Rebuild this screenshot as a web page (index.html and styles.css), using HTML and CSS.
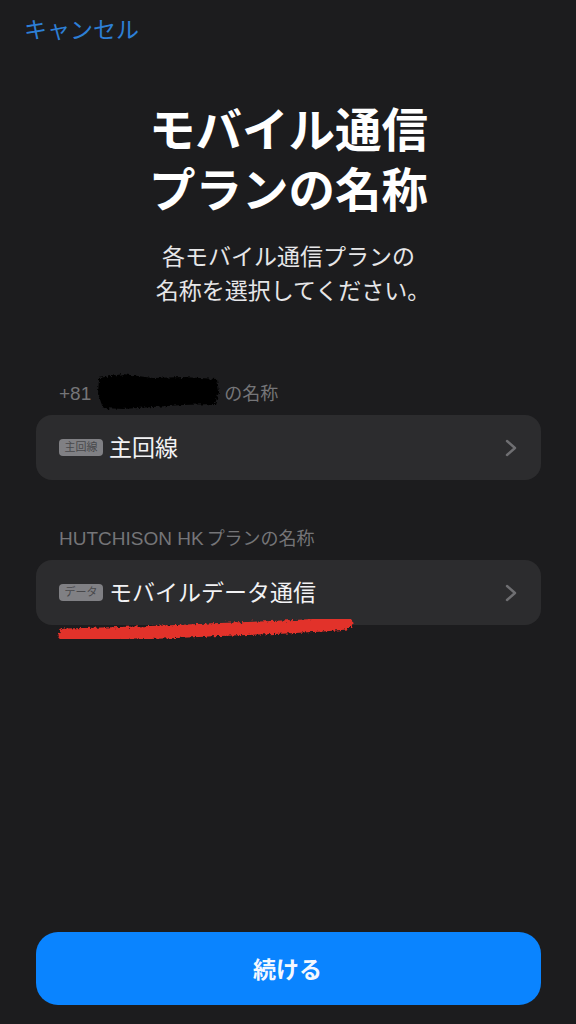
FILE: index.html
```html
<!DOCTYPE html>
<html lang="ja">
<head>
<meta charset="utf-8">
<title>モバイル通信プランの名称</title>
<link rel="stylesheet" href="styles.css">
</head>
<body>
<svg class="defs" width="0" height="0">
  <filter id="rough" x="-5%" y="-30%" width="110%" height="160%">
    <feTurbulence type="fractalNoise" baseFrequency="0.35" numOctaves="2" seed="4"/>
    <feDisplacementMap in="SourceGraphic" scale="5"/>
  </filter>
</svg>
<main class="screen">
  <a class="cancel">キャンセル</a>
  <h1 class="title">モバイル通信<br>プランの名称</h1>
  <p class="subtitle">各モバイル通信プランの<br><span class="hang">名称を選択してください。</span></p>

  <section class="group first">
    <div class="label"><span class="latin">+81</span> <span class="masked"><svg class="scrib-black" viewBox="0 0 130 38" preserveAspectRatio="none"><path d="M6 6 L30 2 L60 6 L90 5 L124 7 L126 20 L122 32 L90 33 L60 35 L30 37 L10 36 L5 22 Z" fill="#000" filter="url(#rough)"/></svg></span>の名称</div>
    <div class="row">
      <span class="tag">主回線</span>
      <span class="name">主回線</span>
      <svg class="chev" viewBox="0 0 12 18"><path d="M2 2 L10 9 L2 16" fill="none" stroke="#6f6f72" stroke-width="2.4" stroke-linecap="round" stroke-linejoin="round"/></svg>
    </div>
  </section>

  <section class="group second">
    <div class="label"><span class="latin">HUTCHISON HK</span><span class="plan">プランの名称</span></div>
    <div class="row">
      <span class="tag">データ</span>
      <span class="name">モバイルデータ通信</span>
      <svg class="chev" viewBox="0 0 12 18"><path d="M2 2 L10 9 L2 16" fill="none" stroke="#6f6f72" stroke-width="2.4" stroke-linecap="round" stroke-linejoin="round"/></svg>
    </div>
    <svg class="scrib-red" viewBox="0 0 300 30"><path d="M8 21 C50 20 90 19 130 17 C180 14 240 14 289 9" fill="none" stroke="#e2302a" stroke-width="13" stroke-linecap="round" filter="url(#rough)"/></svg>
  </section>

  <button class="continue">続ける</button>
</main>
</body>
</html>
```

FILE: styles.css
```css
* { box-sizing: border-box; }
html, body { margin: 0; padding: 0; }
body {
  width: 576px;
  height: 1024px;
  overflow: hidden;
  background: #1c1c1e;
  font-family: "Liberation Sans", "Noto Sans CJK JP", sans-serif;
}
.defs { position: absolute; }
.screen {
  height: 1024px;
  padding: 0 35px 19px 36px;
  display: flex;
  flex-direction: column;
}
.cancel {
  margin: 15px 0 0 -12px;
  font-size: 23px;
  line-height: 30px;
  color: #2d7fd6;
}
.title {
  margin: 56px 0 0;
  text-align: center;
  font-size: 46.5px;
  line-height: 60px;
  font-weight: 700;
  color: #fff;
}
.subtitle {
  margin: 19px 0 0;
  text-align: center;
  font-size: 23px;
  line-height: 34px;
  color: #e6e6e8;
}
.hang { margin-left: 9px; }
.group { position: relative; }
.first { margin-top: 73px; }
.second { margin-top: 46.5px; }
.label {
  height: 34px;
  padding: 1px 0 0 23px;
  font-size: 18px;
  line-height: 24px;
  color: #757578;
  white-space: nowrap;
}
.latin { font-size: 19px; }
.plan { margin-left: 3px; }
.masked {
  position: relative;
  display: inline-block;
  width: 128px;
  height: 1px;
}
.scrib-black {
  position: absolute;
  left: -3px;
  top: -27px;
  width: 130px;
  height: 38px;
}
.row {
  height: 64.5px;
  display: flex;
  align-items: center;
  padding: 1px 23px 0;
  background: #2c2c2e;
  border-radius: 16px;
}
.tag {
  width: 44px;
  height: 17px;
  border-radius: 4px;
  background: #808084;
  color: #48484b;
  font-size: 11px;
  line-height: 17px;
  text-align: center;
  white-space: nowrap;
}
.name {
  margin-left: 6px;
  flex: 1;
  font-size: 23px;
  line-height: 30px;
  color: #f2f2f4;
}
.chev { width: 12px; height: 18px; margin-right: 1px; }
.scrib-red {
  position: absolute;
  left: 21px;
  top: 88px;
  width: 300px;
  height: 30px;
}
.continue {
  margin-top: auto;
  height: 73px;
  width: 100%;
  border: 0;
  padding: 0 2px 2px 0;
  border-radius: 22px;
  background: #0a84ff;
  color: #f4f8ff;
  font-family: inherit;
  font-size: 23px;
  font-weight: 700;
}
```
